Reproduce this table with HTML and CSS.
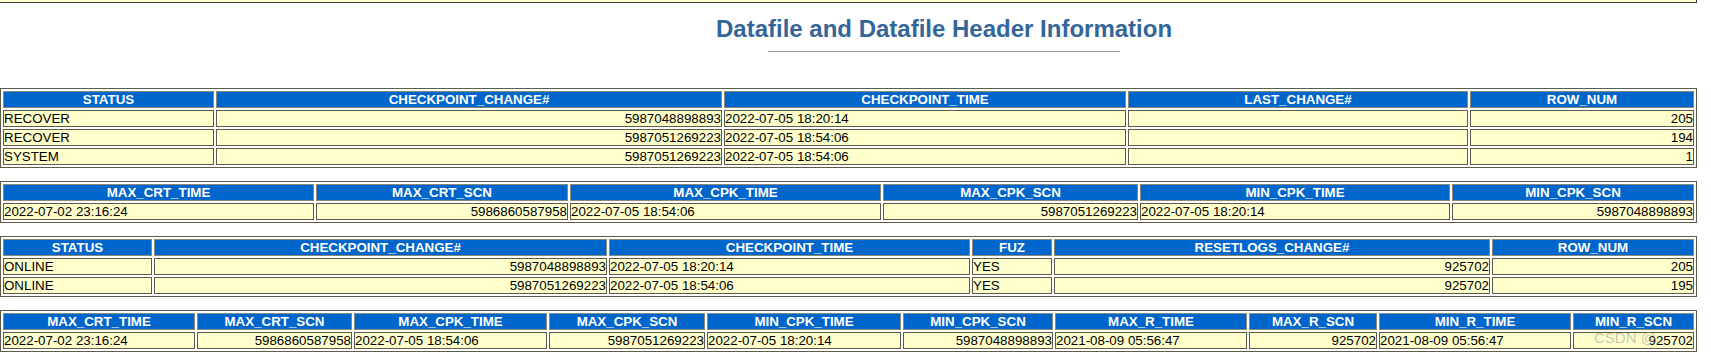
FILE: index.html
```html
<!DOCTYPE html>
<html>
<head>
<meta charset="utf-8">
<title>Datafile and Datafile Header Information</title>
<link rel="stylesheet" href="styles.css">
</head>
<body>
<div class="page">
  <div class="prev-edge"></div>

  <div class="heading">
    <h1 class="title">Datafile and Datafile Header Information</h1>
    <div class="rule"></div>
  </div>

  <div class="tbl t1">
    <div class="th">STATUS</div><div class="th">CHECKPOINT_CHANGE#</div><div class="th">CHECKPOINT_TIME</div><div class="th">LAST_CHANGE#</div><div class="th">ROW_NUM</div>
    <div class="td">RECOVER</div><div class="td num">5987048898893</div><div class="td">2022-07-05 18:20:14</div><div class="td"></div><div class="td num">205</div>
    <div class="td">RECOVER</div><div class="td num">5987051269223</div><div class="td">2022-07-05 18:54:06</div><div class="td"></div><div class="td num">194</div>
    <div class="td">SYSTEM</div><div class="td num">5987051269223</div><div class="td">2022-07-05 18:54:06</div><div class="td"></div><div class="td num">1</div>
  </div>

  <div class="tbl t2">
    <div class="th">MAX_CRT_TIME</div><div class="th">MAX_CRT_SCN</div><div class="th">MAX_CPK_TIME</div><div class="th">MAX_CPK_SCN</div><div class="th">MIN_CPK_TIME</div><div class="th">MIN_CPK_SCN</div>
    <div class="td">2022-07-02 23:16:24</div><div class="td num">5986860587958</div><div class="td">2022-07-05 18:54:06</div><div class="td num">5987051269223</div><div class="td">2022-07-05 18:20:14</div><div class="td num">5987048898893</div>
  </div>

  <div class="tbl t3">
    <div class="th">STATUS</div><div class="th">CHECKPOINT_CHANGE#</div><div class="th">CHECKPOINT_TIME</div><div class="th">FUZ</div><div class="th">RESETLOGS_CHANGE#</div><div class="th">ROW_NUM</div>
    <div class="td">ONLINE</div><div class="td num">5987048898893</div><div class="td">2022-07-05 18:20:14</div><div class="td">YES</div><div class="td num">925702</div><div class="td num">205</div>
    <div class="td">ONLINE</div><div class="td num">5987051269223</div><div class="td">2022-07-05 18:54:06</div><div class="td">YES</div><div class="td num">925702</div><div class="td num">195</div>
  </div>

  <div class="tbl t4">
    <div class="th">MAX_CRT_TIME</div><div class="th">MAX_CRT_SCN</div><div class="th">MAX_CPK_TIME</div><div class="th">MAX_CPK_SCN</div><div class="th">MIN_CPK_TIME</div><div class="th">MIN_CPK_SCN</div><div class="th">MAX_R_TIME</div><div class="th">MAX_R_SCN</div><div class="th">MIN_R_TIME</div><div class="th">MIN_R_SCN</div>
    <div class="td">2022-07-02 23:16:24</div><div class="td num">5986860587958</div><div class="td">2022-07-05 18:54:06</div><div class="td num">5987051269223</div><div class="td">2022-07-05 18:20:14</div><div class="td num">5987048898893</div><div class="td">2021-08-09 05:56:47</div><div class="td num">925702</div><div class="td">2021-08-09 05:56:47</div><div class="td num">925702</div>
  </div>

  <div class="watermark">CSDN @</div>
</div>
</body>
</html>
```

FILE: styles.css
```css
html, body {
  margin: 0;
  padding: 0;
  background: #ffffff;
}

.page {
  position: relative;
  width: 1697px;
  font-family: "Liberation Sans", Arial, Helvetica, sans-serif;
}

.prev-edge {
  height: 2px;
  background: #ffffcc;
  border-bottom: 1px solid #3a3a30;
  border-right: 1px solid #3a3a30;
}

.heading {
  display: flex;
  flex-direction: column;
  align-items: center;
  padding-left: 191px;
  margin-top: 12px;
}

.title {
  margin: 0;
  font-size: 24px;
  line-height: 28px;
  font-weight: bold;
  color: #336699;
}

.rule {
  margin-top: 8px;
  width: 352px;
  height: 0;
  border-top: 1px solid #9a9a9a;
}

.tbl {
  display: grid;
  grid-auto-rows: 17px;
  gap: 2px;
  padding: 2px;
  border: 1px solid #5c5c4c;
  background: #ffffff;
  width: max-content;
  margin-top: 13px;
}

.heading + .tbl {
  margin-top: 36px;
}

.t1 { grid-template-columns: 211px 506px 402px 340px 224px; }
.t2 { grid-template-columns: 311px 252px 311px 255px 310px 242px; }
.t3 { grid-template-columns: 149px 453px 361px 80px 436px 202px; }
.t4 { grid-template-columns: 192px 155px 193px 156px 194px 150px 192px 128px 192px 121px; }

.th, .td {
  box-sizing: border-box;
  height: 17px;
  border: 1px solid #5c5c4c;
  font-size: 13.33px;
  line-height: 15px;
  white-space: nowrap;
  overflow: hidden;
  padding: 0;
}

.th {
  background: #0066cc;
  color: #ffffff;
  font-weight: bold;
  text-align: center;
  border-color: #8a8a7a;
}

.td {
  background: #ffffcc;
  color: #000000;
  text-align: left;
}

.td.num {
  text-align: right;
}

.watermark {
  position: absolute;
  left: 1594px;
  top: 329px;
  font-size: 15px;
  line-height: 17px;
  color: rgba(150, 150, 150, 0.55);
  font-family: "Liberation Sans", "Noto Sans CJK SC", sans-serif;
}
```
